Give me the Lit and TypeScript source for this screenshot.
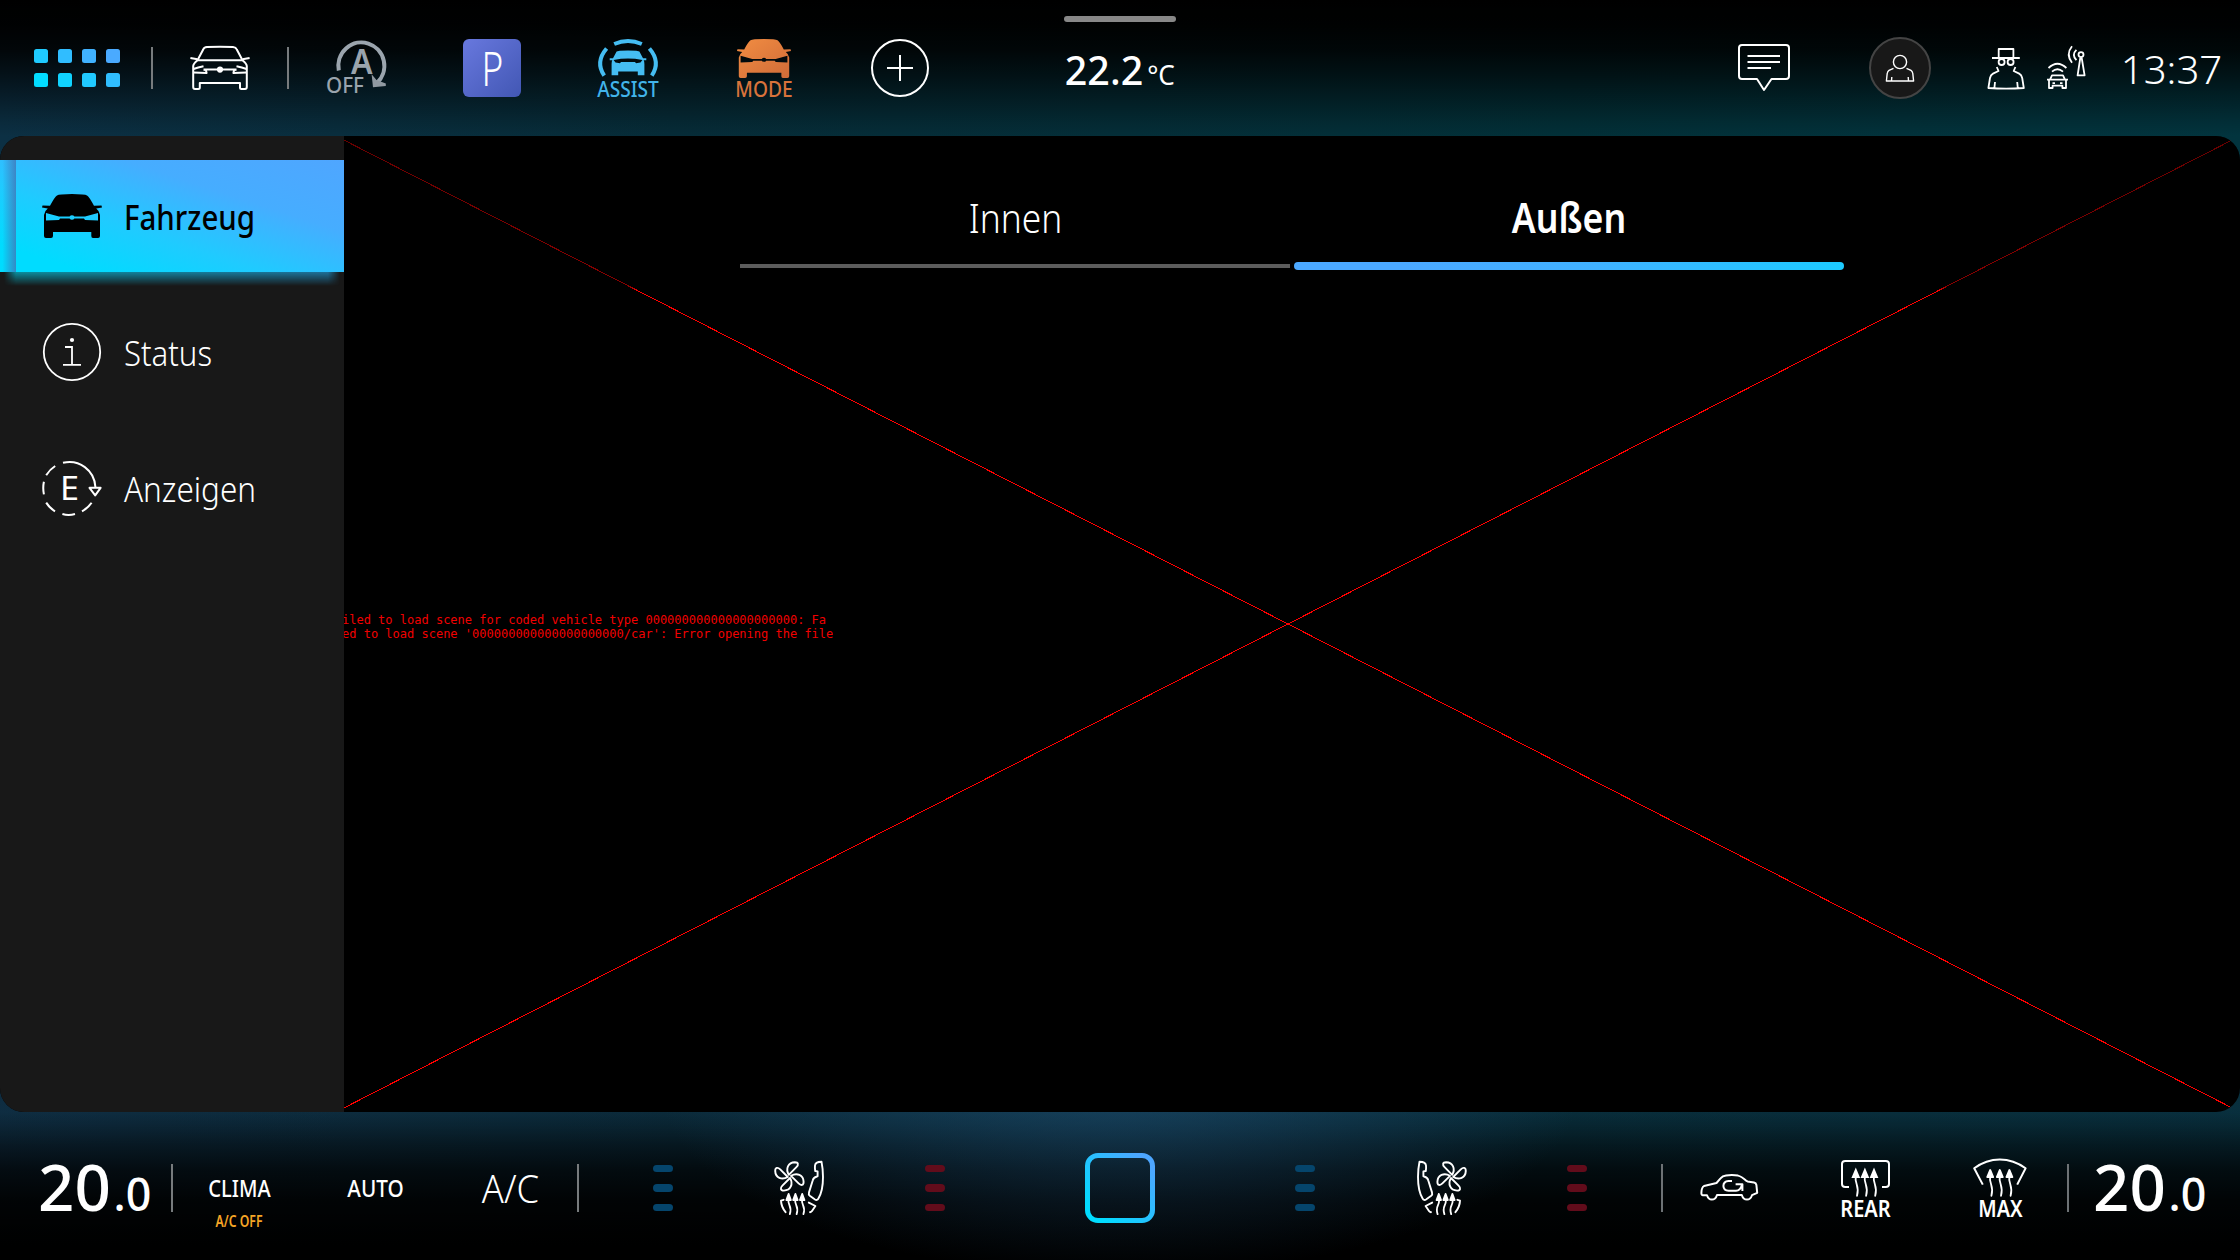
import { LitElement, html, svg, css } from "lit";
import { customElement, property } from "lit/decorators.js";

/* Condensed caption: cap height `cap`, drawn exactly `w` pixels wide. */
@customElement("fit-label")
class FitLabel extends LitElement {
  @property() text = "";
  @property({ type: Number }) w = 60;
  @property({ type: Number }) cap = 16;
  @property({ type: Number }) weight = 400;
  static styles = css`
    :host { display: block; line-height: 0; }
    svg { display: block; overflow: visible; }
    text { font-family: "Noto Sans", "Open Sans", sans-serif; fill: currentColor; white-space: pre; }
  `;
  render() {
    const size = this.cap / 0.714;
    const b = size * 0.03;
    const drop = this.cap >= 20 || this.cap <= 12 ? 0.8 : 0;
    return html`<svg width=${this.w} height=${this.cap}>
      <text x=${-b} y=${this.cap + drop} font-size=${size} font-weight=${this.weight}
        textLength=${this.w + 2 * b} lengthAdjust="spacingAndGlyphs">${this.text}</text>
    </svg>`;
  }
}

const label = (text: string, w: number, cap: number, weight = 400) =>
  html`<fit-label .text=${text} .w=${w} .cap=${cap} .weight=${weight}></fit-label>`;

const carBody =
  "M15,1.5Q17,0 30,0Q43,0 45,1.5Q47,2.5 52,11.8L59.5,11.6L60,13.6L54.2,14.6Q57.5,17 58,21V42Q58,44 56,44H51Q49.3,44 49.3,42V38H11V42Q11,44 9,44H4Q2,44 2,42V21Q2.5,17 5.8,14.6L0,13.6L.5,11.6L8,11.8Q13,2.5 15,1.5Z" +
  "M4,19L17,22.5H27.6A2.8,2.8 0 0 1 32.4,22.5H43L56,19V26.5L43,26L42,24.4H32.4A2.8,2.8 0 0 1 27.6,24.4H18L17,26L4,26.5Z";

const solidCar = (w: number, h: number, fill: string) => html`
  <svg width=${w} height=${h} viewBox="0 0 60 44" preserveAspectRatio="none">
    <defs>
      <linearGradient id="modeFill" x1="0" y1="0" x2="1" y2="1">
        <stop offset="0" stop-color="#f28d42" /><stop offset="1" stop-color="#cf6b38" />
      </linearGradient>
    </defs>
    <path d=${carBody} fill=${fill} fill-rule="evenodd" />
  </svg>`;

const heatArrow = (x: number, y: number, h: number, half = 2.9, head = 7) => svg`
  <path fill="none" stroke="#fff" stroke-width="1.8" stroke-linecap="round"
    d="M${x},${y + 4} C${x - 1.6},${y + h * 0.52} ${x + 4.2},${y + h * 0.56} ${x + 1.2},${y + h}" />
  <path fill="#fff" d="M${x},${y - 1.5}L${x + half},${y - 1.5 + head}H${x - half}Z" />`;

const outlineCar = html`
  <svg width="60" height="46" viewBox="0 0 60 46" fill="none" stroke="#fff" stroke-width="2" stroke-linejoin="round">
    <path d="M3.2,24V21Q3.4,18.5 7.5,15.2L13.2,4.5Q14,2.4 17,2.1Q30,1.2 43,2.1Q46,2.4 46.8,4.5L52.5,15.2Q56.6,18.5 56.8,21V42Q56.8,44 55,44H51.5Q50,44 50,42.5V38H9.8V42.5Q9.8,44 8.3,44H5Q3.2,44 3.2,42Z" />
    <path d="M7.5,15.2H52.5M7.5,14.2L.4,13M52.5,14.2L59.6,13" />
    <path d="M3.5,24Q8,22.4 13.5,21.3M13.5,24.6H46.5M56.5,24Q52,22.4 46.5,21.3M13.5,24.6L16,25.4L16.6,28L3.5,27.6M46.5,24.6L44,25.4L43.4,28L56.5,27.6" />
    <circle cx="30" cy="24.6" r="2.1" fill="#fff" />
  </svg>`;

const startStop = html`
  <svg width="60" height="56" viewBox="0 0 60 56" class="grey">
    <path d="M12.8,30.5A23,23.4 0 1 1 51,43" fill="none" stroke="#9ba5ae" stroke-width="4" />
    <path d="M45.6,34.2L50.5,40L59.8,43.5V46L47,47.2Z" fill="#9199a1" />
    <text x="25" y="34" font-size="33.5" font-weight="600" textLength="21.5" lengthAdjust="spacingAndGlyphs">A</text>
    <text x="0" y="53.4" font-size="22" font-weight="500" textLength="38" lengthAdjust="spacingAndGlyphs">OFF</text>
  </svg>`;

const assist = html`
  <svg width="60" height="39" viewBox="0 0 60 39">
    <g fill="none" stroke="#45bdf2" stroke-width="4">
      <path d="M16.2,6Q30,.2 43.8,6M8.6,10.5Q-3,24 6.2,37.6M51.4,10.5Q63,24 53.8,37.6" />
    </g>
    <path fill="#45bdf2" fill-rule="evenodd"
      d="M18.6,13.6Q19.2,12.4 30,12.4Q40.8,12.4 41.4,13.6L45,20.2H48.3V22.3H45.7Q46.4,23.6 46.4,26V37.2H39.8V33.4H20.2V37.2H13.6V26Q13.6,23.6 14.3,22.3H11.7V20.2H15ZM15.6,22L17.5,24.6L22,25.2L23,24H37L38,25.2L42.5,24.6L44.4,22Q37,20.6 30,20.6Q23,20.6 15.6,22Z" />
  </svg>`;

const plus = html`
  <svg width="60" height="60" viewBox="0 0 60 60" fill="none" stroke="#fff" stroke-width="2">
    <circle cx="30" cy="30" r="28" /><path d="M30,17V43M17,30H43" />
  </svg>`;

const message = html`
  <svg width="54" height="50" viewBox="0 0 54 50" fill="none" stroke="#fff" stroke-width="2" stroke-linejoin="round">
    <path d="M5,2H49Q52,2 52,5V33Q52,36 49,36H34.5L27,47L20,36H5Q2,36 2,33V5Q2,2 5,2Z" />
    <path d="M10.5,13H43M10.5,19H43M10.5,25H34" />
  </svg>`;

const avatar = html`
  <svg width="62" height="62" viewBox="0 0 62 62" fill="none" stroke="#fff" stroke-width="1.4" stroke-linejoin="round">
    <circle cx="31" cy="31" r="30" fill="#181818" stroke="#444" stroke-width="2" />
    <circle cx="31" cy="25" r="6.6" />
    <path d="M24.5,31.3L20,33.4Q18.6,34.2 18.2,36.5L17.4,44H44.6L43.8,36.5Q43.4,34.2 42,33.4L37.5,31.3M22.8,40L22.5,44M39.2,40L39.5,44" />
  </svg>`;

const spy = html`
  <svg width="40" height="44" viewBox="0 0 40 44" fill="none" stroke="#fff" stroke-width="1.8" stroke-linejoin="round">
    <path d="M12.7,12V3H27.4V12M6,12H33.8" />
    <circle cx="15.6" cy="16" r="3" /><circle cx="24.6" cy="16" r="3" />
    <path d="M10.8,21L12.5,25L7,27.6Q4.6,28.8 4,32L2.4,42Q20,43.4 37.8,42L36.2,32Q35.6,28.8 33.2,27.6L27.7,25L29.4,21M9,36L8.4,42M31.2,36L31.8,42" />
  </svg>`;

const telematics = html`
  <svg width="42" height="46" viewBox="0 0 42 46" fill="none" stroke="#fff" stroke-width="1.8" stroke-linejoin="round">
    <path d="M2.5,23Q11.4,14.5 20.4,23M6,26.6Q11.4,22 17,26.6" />
    <path d="M1,34.6H22M4,34.6L6,30.4H17L19,34.6M3,34.6V43H6.6V40.6H16.4V43H20V34.6M6.5,38.2H9M14,38.2H16.5" />
    <circle cx="35" cy="9.6" r="2.5" /><path d="M34.2,13.5H35.8L38.6,30.4H31.6Z" />
    <path d="M26,1.2Q19.5,9.3 26,17.8M30.4,4.8Q25.4,9.6 30.4,15.2" />
  </svg>`;

const blade = "M-.6,-1.6C-4,-7.5 -1.5,-14 5.5,-14.2C9,-14.2 9.4,-11.6 7,-9.2Z";
const seat = html`
  <svg width="53" height="56" viewBox="12 11 53 56" fill="none" stroke="#fff" stroke-width="1.9" stroke-linejoin="round" stroke-linecap="round">
    <g transform="translate(28.4 27.4)">
      ${[0, 90, 180, 270].map((a) => svg`<path d=${blade} transform="rotate(${a})" />`)}
    </g>
    <path d="M54,16.5Q54.2,13 60.5,12.8Q62,20 62,28Q62,42 57.4,49.5Q56,51.8 54,50.5L48.8,46.8Q47.3,45.6 48,43.4L51.8,31.2Q52.6,28.4 55.4,27.8L56.6,27.2V22.4L54.2,22Q53.7,19 54,16.5Z" />
    <path d="M22.6,50.8L20,51.6Q20.2,57.8 24.6,63.2M47.8,53.6L54.4,57L51,62Q50.4,63 49,63.2" />
    ${[27.6, 34.4, 41.2].map((x) => heatArrow(x, 46.5, 18.6, 2.2, 6))}
  </svg>`;

const recirculate = html`
  <svg width="59" height="28" viewBox="0 0 59 28" fill="none" stroke="#fff" stroke-width="2" stroke-linejoin="round">
    <path d="M7,21.2H3Q1.2,21.2 1.4,18.5Q1.6,13.4 4,12L16.5,9L20.5,4.4Q22.6,1.8 26,1.4Q33,.6 38,1.6Q41.5,2.4 46,6.6L47.5,7.4L54,8.4Q56,8.8 56.4,11L57.2,18.8L52,21.2Q50.5,25.6 47,25.6Q43.2,25.6 41.8,21H17Q15.6,25.6 11.8,25.6Q8.4,25.6 7,21.2Z" />
    <path d="M32,7H28.5Q23.4,7.4 23.4,12Q23.6,16.6 28.6,16.8H36Q40.4,16.4 41.8,11.2M35.6,10.2H42.4V17" />
  </svg>`;

const rearHeat = html`
  <svg width="50" height="38" viewBox="0 0 50 38" fill="none" stroke="#fff" stroke-width="2">
    <path d="M9,29H5.2Q2,29 2,26V6Q2,3 5.2,3H45.8Q49,3 49,6V26Q49,29 45.8,29H42" />
    ${[15.8, 24.9, 34].map((x) => heatArrow(x, 13.6, 24.2))}
  </svg>`;

const frontHeat = html`
  <svg width="54" height="38" viewBox="0 0 54 38" fill="none" stroke="#fff" stroke-width="2" stroke-linejoin="round">
    <path d="M9.8,26.6L1.2,10.2Q13,1.4 26.8,1.4Q40.6,1.4 52.6,10.2L44.2,26.6" />
    ${[17.2, 26.8, 36.4].map((x) => heatArrow(x, 13.6, 24.2))}
  </svg>`;

const info = html`
  <svg width="60" height="60" viewBox="0 0 60 60" fill="none" stroke="#fff" stroke-width="1.8">
    <circle cx="30" cy="30" r="28.2" />
    <path d="M23,25H30V42.5M21,42.8H39" /><circle cx="30" cy="18" r="2.1" fill="#fff" stroke="none" />
  </svg>`;

const displays = html`
  <svg width="60" height="60" viewBox="0 0 60 60" fill="none" stroke="#fff" stroke-width="2">
    <path d="M21,4.8A26,26.4 0 0 1 53.4,29" />
    <path d="M47.5,29.8H58.6L53.2,37.4Z" stroke-linejoin="round" />
    <path d="M13.2,8Q7.6,11.6 4.2,17.2M1.9,23.8Q.6,30 1.9,36.4M4.2,44.6Q7.6,50 13,53.4M20.4,56Q26.5,57.8 33,56M40,53.4Q46,50 49.6,44.8" />
    <text x="18" y="42" font-size="33" textLength="19" lengthAdjust="spacingAndGlyphs">E</text>
  </svg>`;

const logoSquare = html`
  <svg width="70" height="70" viewBox="0 0 70 70" fill="none">
    <defs>
      <linearGradient id="homeEdge" x1="0" y1="1" x2="1" y2="0">
        <stop offset=".1" stop-color="#00dcff" /><stop offset=".9" stop-color="#4da6ff" />
      </linearGradient>
    </defs>
    <rect x="2.5" y="2.5" width="65" height="65" rx="10.5" stroke="url(#homeEdge)" stroke-width="5" />
  </svg>`;

const ZEROS = "0".repeat(21);
const ERRORS = [
  `iled to load scene for coded vehicle type ${ZEROS}: Fa`,
  `ed to load scene '${ZEROS}/car': Error opening the file`,
];

@customElement("app-root")
class AppRoot extends LitElement {
  static styles = css`
    :host {
      display: flex; flex-direction: column; width: 2240px; height: 1260px; overflow: hidden;
      color: #fff; font-family: "Noto Sans", sans-serif;
      background:
        radial-gradient(ellipse 460px 185px at 1120px 1090px, rgba(34, 84, 124, .5), transparent),
        linear-gradient(#000 0, #000000f7 25px, #000000dc 50px, #000000a0 75px, #0000005c 100px, #00000020 122px, #0000 136px,
          #0000 1112px, #0000002a 1125px, #00000074 1145px, #000000bc 1170px, #000000ea 1200px, #000 1245px),
        linear-gradient(#0000 624px, #12283d66 624px),
        linear-gradient(90deg, #0c3044, #062c38 30%, #023038 70%, #02343e);
      position: relative;
    }
    svg { display: block; overflow: visible; flex: none; }
    svg text { font-family: "Noto Sans", sans-serif; stroke: none; fill: #fff; }
    .grey text { fill: #9aa4ad; }
    .bar { display: grid; align-items: center; justify-items: center; box-sizing: border-box; }
    .top { height: 136px; grid-template-columns: 152px repeat(6, 136px) 304px 424px 136px 136px 1fr; }
    .bottom {
      height: 148px; padding-top: 4px;
      grid-template-columns: 172px 135px 136px 135px 17px 136px 136px 136px 234px 136px 136px 136px 17px 135px 136px 134px 1fr;
    }
    .cell { position: relative; display: flex; flex-direction: column; align-items: center; justify-content: center;
      width: 100%; height: 60px; box-sizing: border-box; }
    .rule { border-right: 2px solid #777b7d; height: 42px; width: calc(100% + 1px); justify-self: start; padding-left: 1px; }
    .bottom .rule { height: 48px; }
    .rule-l { border-left: 2px solid #6d7275; height: 48px; }
    .recirc { width: calc(100% + 1px); padding-right: 2px; justify-self: end; }
    .end { align-items: flex-start; padding-left: 26px; }
    .apps { display: grid; grid-template-columns: repeat(4, 14px); gap: 10px; padding-left: 2px; }
    .app { height: 14px; border-radius: 2.5px; }
    .park { width: 58px; height: 58px; border-radius: 6px; display: flex; align-items: center; justify-content: center;
      background: linear-gradient(135deg, #6878de, #4257b4); }
    .icon-label { display: flex; flex-direction: column; align-items: center; gap: 4px; padding-bottom: 1px; }
    .assist { color: #42b4ea; }
    .mode { color: #d9733b; gap: 3px; }
    .handle { position: absolute; left: 1064px; top: 16px; width: 112px; height: 6px; border-radius: 3px; background: #888; }
    .outside { display: flex; align-items: flex-end; gap: 6px; padding-top: 3px; }
    .status { display: flex; align-items: center; justify-self: start; padding-left: 18px; }
    .spy { margin-right: 20px; }
    .clock { margin-left: 34px; padding-top: 2px; }
    .panel { display: flex; height: 976px; border-radius: 24px; overflow: hidden; background: #000; }
    .side { width: 344px; flex: none; background: #181818; padding-top: 24px; display: flex; flex-direction: column; gap: 24px;
      box-sizing: border-box; position: relative; z-index: 1; }
    .item { height: 112px; display: flex; align-items: center; padding-left: 42px; gap: 23px; }
    .active { position: relative; color: #000;
      background: linear-gradient(18deg, #00dcff 12%, #1fcbff 38%, #46adff 68%, #4fa6ff); }
    .active::before { content: ""; position: absolute; left: 0; top: 0; width: 16px; height: 112px;
      background: linear-gradient(90deg, #3d8fd000 15%, #4077b8d0); }
    .active::after { content: ""; position: absolute; left: 4px; right: 4px; top: 112px; height: 14px;
      background: linear-gradient(90deg, #0a90a0, #1f6f98);
      -webkit-mask: linear-gradient(#000, transparent), linear-gradient(90deg, transparent, #000 12px calc(100% - 12px), transparent);
      -webkit-mask-composite: source-in; mask-composite: intersect; }
    .stage { flex: 1; position: relative; display: flex; flex-direction: column; align-items: center; }
    .cross { position: absolute; left: -8px; top: 0; }
    .veil { position: absolute; left: 0; right: 0; top: 0; height: 155px; background: linear-gradient(#0009, #0007 97%, #0000); }
    .tabs { position: relative; display: grid; grid-template-columns: 550px 550px; gap: 4px; padding-top: 67px; }
    .tab { display: flex; flex-direction: column; align-items: center; height: 69px; justify-content: space-between; }
    .line { width: 550px; height: 4px; background: #5c5c5c; margin-bottom: 4px; }
    .line-on { width: 550px; height: 8px; border-radius: 4px; margin-bottom: 2px;
      background: linear-gradient(90deg, #4ba8ff 20%, #40b1ff 55%, #1ccaff); }
    .error { position: absolute; left: -2px; top: 477px; color: #f20000; font: 12px/14px "DejaVu Sans Mono", monospace; white-space: pre; }
    .error-line { height: 14px; overflow: hidden; }
    .temp { display: flex; align-items: flex-end; gap: 6px; padding-bottom: 2px; }
    .left { padding-left: 18px; }
    .clima { display: grid; grid-template-rows: 1fr auto 1fr; justify-items: center; height: 100%; width: 100%;
      box-sizing: border-box; padding-right: 1px; }
    .clima .mid { grid-row: 2; }
    .note { grid-row: 3; padding-top: 18px; color: #f5a525; }
    .pills { display: grid; gap: 12px; }
    .pill { width: 20px; height: 7.5px; border-radius: 4px; background: #05456c; }
    .hot { background: #620c1b; }
    .flip { transform: scaleX(-1); }
    .defrost { display: flex; flex-direction: column; align-items: center; gap: 4px; padding-bottom: 1px; }
  `;

  private pills(hot = false) {
    return html`<div class="pills">${[0, 1, 2].map(() => html`<div class="pill ${hot ? "hot" : ""}"></div>`)}</div>`;
  }

  private temp(side: string) {
    return html`<div class="temp ${side}">${label("20", 69, 45, 500)}${label(".0", 35, 33, 500)}</div>`;
  }

  render() {
    const appColors = ["#1fcbff", "#30bdff", "#40b2ff", "#4aaaff", "#02dcff", "#10d3ff", "#20c9ff", "#30beff"];
    return html`
      <div class="handle"></div>
      <header class="bar top">
        <div class="cell rule"><div class="apps">
          ${appColors.map((c) => html`<div class="app" style="background:${c}"></div>`)}
        </div></div>
        <div class="cell rule">${outlineCar}</div>
        <div class="cell">${startStop}</div>
        <div class="cell"><div class="park">${label("P", 19, 34, 300)}</div></div>
        <div class="icon-label assist">${assist}${label("ASSIST", 60, 16, 550)}</div>
        <div class="icon-label mode">${solidCar(54, 39, "url(#modeFill)")}${label("MODE", 56, 16, 550)}</div>
        <div class="cell">${plus}</div>
        <div class="outside">${label("22.2", 76, 28, 500)}${label("°C", 26, 20, 400)}</div>
        <div></div>
        <div class="cell">${message}</div>
        <div class="cell">${avatar}</div>
        <div class="status">
          <div class="spy">${spy}</div>${telematics}
          <div class="clock">${label("13:37", 99, 28, 300)}</div>
        </div>
      </header>

      <main class="panel">
        <nav class="side">
          <div class="item active">${solidCar(60, 44, "#000")}${label("Fahrzeug", 129, 25, 500)}</div>
          <div class="item">${info}${label("Status", 86, 25, 300)}</div>
          <div class="item">${displays}${label("Anzeigen", 130, 25, 300)}</div>
        </nav>
        <section class="stage">
          <svg class="cross" width="1904" height="976" shape-rendering="crispEdges" stroke="#f00">
            <path d="M0,0L1904,976M0,976L1904,0" />
          </svg>
          <div class="veil"></div>
          <div class="tabs">
            <div class="tab">${label("Innen", 91, 29, 300)}<div class="line"></div></div>
            <div class="tab">${label("Außen", 112, 29, 600)}<div class="line-on"></div></div>
          </div>
          <div class="error">${ERRORS.map((t) => html`<div class="error-line">${t}</div>`)}</div>
        </section>
      </main>

      <footer class="bar bottom">
        <div class="cell rule">${this.temp("left")}</div>
        <div class="clima"><div class="mid">${label("CLIMA", 61, 16.5, 550)}</div><div class="note">${label("A/C OFF", 46, 12, 600)}</div></div>
        ${label("AUTO", 55, 16.5, 550)}
        <div class="cell rule">${label("A/C", 55, 27, 300)}</div>
        <div></div>
        ${this.pills()}
        ${seat}
        ${this.pills(true)}
        ${logoSquare}
        ${this.pills()}
        <div class="flip">${seat}</div>
        ${this.pills(true)}
        <div></div>
        <div class="cell rule-l recirc">${recirculate}</div>
        <div class="defrost">${rearHeat}${label("REAR", 49, 16.5, 600)}</div>
        <div class="defrost">${frontHeat}${label("MAX", 43, 16.5, 600)}</div>
        <div class="cell rule-l end">${this.temp("right")}</div>
      </footer>
    `;
  }
}
